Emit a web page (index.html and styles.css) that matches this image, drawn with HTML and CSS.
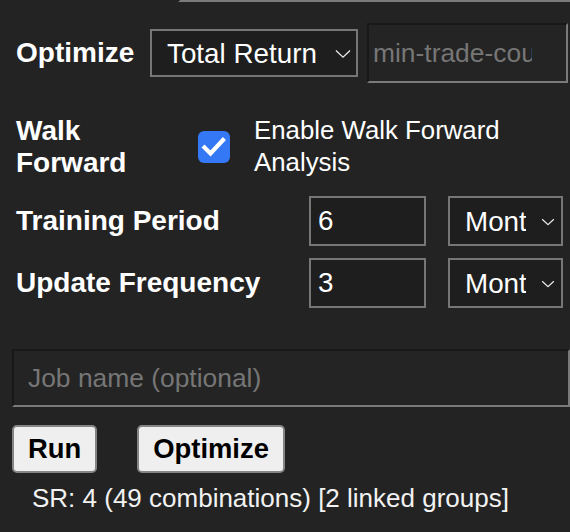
FILE: index.html
```html
<!DOCTYPE html>
<html lang="en">
<head>
<meta charset="utf-8">
<title>Optimize settings</title>
<link rel="stylesheet" href="styles.css">
</head>
<body>
<div class="panel">
  <div class="prev-input"></div>

  <div class="row row-optimize">
    <span class="label opt-label">Optimize</span>
    <span class="select-wrap sel-metric">
      <select class="select"><option>Total Return</option></select>
      <svg class="chev chev-lg" viewBox="0 0 17 9" width="16" height="9"><path d="M1 1 L8.5 8 L16 1" fill="none" stroke="#e8e8e8" stroke-width="1.4"/></svg>
    </span>
    <input class="inset-input min-trade" type="text" placeholder="min-trade-count">
  </div>

  <div class="row row-wf">
    <span class="label wf-label">Walk Forward</span>
    <label class="check-label">
      <span class="checkbox">
        <svg viewBox="0 0 32 32" width="32" height="32"><path d="M6.5 16.5 L12.5 22.5 L25 9" fill="none" stroke="#fff" stroke-width="4.2" stroke-linecap="square"/></svg>
      </span>
      <span class="check-text">Enable Walk Forward Analysis</span>
    </label>
  </div>

  <div class="row row-period">
    <span class="label period-label">Training Period</span>
    <input class="num-input" type="text" value="6">
    <span class="select-wrap sel-unit">
      <select class="select"><option>Months</option></select>
      <svg class="chev chev-sm" viewBox="0 0 17 9" width="14" height="7"><path d="M1 1 L8.5 8 L16 1" fill="none" stroke="#e8e8e8" stroke-width="1.6"/></svg>
    </span>
  </div>

  <div class="row row-period row-update">
    <span class="label period-label">Update Frequency</span>
    <input class="num-input" type="text" value="3">
    <span class="select-wrap sel-unit">
      <select class="select"><option>Months</option></select>
      <svg class="chev chev-sm" viewBox="0 0 17 9" width="14" height="7"><path d="M1 1 L8.5 8 L16 1" fill="none" stroke="#e8e8e8" stroke-width="1.6"/></svg>
    </span>
  </div>

  <input class="inset-input job-name" type="text" placeholder="Job name (optional)">

  <div class="buttons">
    <button class="btn">Run</button>
    <button class="btn">Optimize</button>
  </div>

  <div class="summary">SR: 4 (49 combinations) [2 linked groups]</div>
</div>
</body>
</html>
```

FILE: styles.css
```css
html, body {
  margin: 0;
  padding: 0;
  background: #232323;
}

body {
  font-family: "Liberation Sans", Arial, Helvetica, sans-serif;
  color: #ffffff;
  overflow: hidden;
}

.panel {
  padding: 0 0 0 12px;
  width: 570px;
  box-sizing: border-box;
}

.prev-input {
  margin-left: 166px;
  margin-top: -10px;
  height: 10px;
  border-left: 2px solid #161616;
  border-bottom: 2px solid #7a7a7a;
}

.row {
  display: flex;
  align-items: center;
}

.label {
  font-weight: bold;
  font-size: 28px;
  line-height: 31.5px;
  padding-left: 4px;
  box-sizing: border-box;
  white-space: nowrap;
}

.opt-label {
  width: 138px;
}

.row-optimize {
  margin-top: 21px;
  height: 60px;
}

.select-wrap {
  position: relative;
  display: inline-block;
}

.select {
  appearance: none;
  -webkit-appearance: none;
  display: block;
  box-sizing: border-box;
  height: 48px;
  margin: 0;
  border: 2px solid #767676;
  border-radius: 0;
  background: #1e1e1e;
  color: #ffffff;
  font-family: "Liberation Sans", Arial, Helvetica, sans-serif;
  font-size: 27.8px;
  padding: 0 35px 0 15px;
  outline: none;
}

.sel-metric .select {
  width: 208px;
}

.chev {
  position: absolute;
  top: 50%;
  pointer-events: none;
}

.chev-lg {
  right: 7px;
  transform: translateY(-40%);
}

.chev-sm {
  right: 8px;
  transform: translateY(-35%);
}

.inset-input {
  box-sizing: border-box;
  margin: 0;
  background: #242424;
  color: #ffffff;
  font-family: "Liberation Sans", Arial, Helvetica, sans-serif;
  font-size: 26.4px;
  border-style: solid;
  border-width: 2px;
  border-color: #181818 #7a7a7a #7a7a7a #181818;
  outline: none;
}

.inset-input::placeholder {
  color: #767676;
  opacity: 1;
}

.min-trade {
  margin-left: 9px;
  width: 201px;
  height: 60px;
  padding: 0 34px 0 4px;
}

.row-wf {
  margin-top: 32px;
}

.wf-label {
  width: 174px;
  white-space: normal;
}

.check-label {
  display: flex;
  align-items: center;
  margin-left: 12px;
}

.checkbox {
  display: block;
  width: 32px;
  height: 32px;
  border-radius: 6px;
  background: #3478f6;
  flex: none;
}

.checkbox svg {
  display: block;
}

.check-text {
  margin-left: 24px;
  font-size: 25.8px;
  line-height: 31.5px;
  width: 290px;
}

.row-period {
  margin-top: 18px;
  height: 50px;
}

.row-update {
  margin-top: 12px;
}

.period-label {
  width: 297px;
}

.num-input {
  box-sizing: border-box;
  width: 117px;
  height: 50px;
  margin: 0;
  border: 2px solid #767676;
  border-radius: 0;
  background: #1e1e1e;
  color: #ffffff;
  font-family: "Liberation Sans", Arial, Helvetica, sans-serif;
  font-size: 27.8px;
  padding: 0 0 0 7px;
  outline: none;
}

.sel-unit {
  margin-left: 22px;
}

.sel-unit .select {
  width: 115px;
  height: 50px;
}

.job-name {
  display: block;
  margin-top: 41px;
  width: 558px;
  height: 58px;
  padding: 0 14px;
}

.buttons {
  display: flex;
  gap: 40px;
  margin-top: 18px;
}

.btn {
  box-sizing: border-box;
  height: 48px;
  margin: 0;
  padding: 0 14px;
  background: #efefef;
  color: #000000;
  border: 2px solid #858585;
  border-radius: 5px;
  font-family: "Liberation Sans", Arial, Helvetica, sans-serif;
  font-weight: bold;
  font-size: 27.4px;
}

.summary {
  margin-top: 10px;
  padding-left: 20px;
  font-size: 26px;
  line-height: 30px;
  color: #f2f2f2;
}
```
